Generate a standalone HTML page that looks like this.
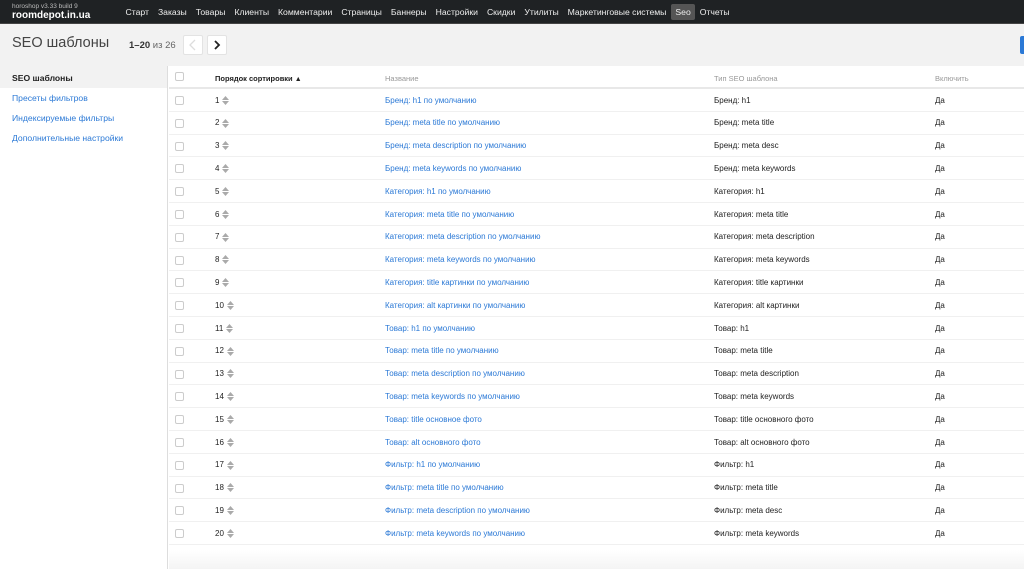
<!DOCTYPE html>
<html><head><meta charset="utf-8"><style>
*{box-sizing:border-box;margin:0;padding:0}
body{width:1024px;height:569px;overflow:hidden;background:#fff;font-family:"Liberation Sans",sans-serif;position:relative}
.nav{position:absolute;left:0;top:0;width:1024px;height:24px;background:#1f2224;border-bottom:1px solid #444}
.ver{position:absolute;left:12px;top:3px;font-size:6.5px;color:#bbb}
.logo{position:absolute;left:12px;top:9.5px;font-size:10px;font-weight:bold;color:#fff}
.menu{position:absolute;left:121px;top:4px;display:flex;font-size:8.65px;color:#eee}
.menu span{padding:3px 4.5px;border-radius:2px}
.menu .act{background:#555}
.head{position:absolute;left:0;top:24px;width:1024px;height:42px;background:#f2f2f2}
.title{position:absolute;left:12px;top:11px;font-size:14.5px;color:#444}
.cnt{position:absolute;left:129px;top:15.5px;font-size:9.5px;color:#333}
.btn{position:absolute;top:11px;width:20px;height:20px;background:#fff;border:1px solid #e3e3e3;border-radius:2px}
.blue{position:absolute;right:0;top:12px;width:4px;height:18px;background:#2b79d6;border-radius:2px 0 0 2px}
.side{position:absolute;left:0;top:66px;width:168px;height:503px;border-right:1px solid #ddd}
.side div{height:20px;padding-left:12px;font-size:8.6px;color:#2b79d6;line-height:20px}
.side .a{background:#f2f2f2;color:#222;font-weight:bold;height:22px;line-height:24px}
.th{position:absolute;left:169px;top:66px;width:855px;height:23px;border-bottom:2px solid #e8e8e8;font-size:7.5px;color:#999}
.row{position:absolute;left:169px;width:855px;height:22.8px;border-bottom:1px solid #f0f0f0;font-size:8px;color:#222}
.cb{position:absolute;left:6px;top:7px;width:9px;height:9px;border:1px solid #ccc;border-radius:2px;background:#fff}
.c{position:absolute;top:6.5px;white-space:nowrap}
.n{left:46px}.nm{left:216px;color:#2b79d6}.t{left:545px}.e{left:766px}
.arr{display:inline-block;vertical-align:middle;margin-left:3px;width:7px;height:9px}
.foot{position:absolute;left:169px;top:550px;width:855px;height:19px;background:linear-gradient(#fff,#f4f4f4)}
</style></head><body>
<div class="nav"><div class="ver">horoshop v3.33 build 9</div><div class="logo">roomdepot.in.ua</div>
<div class="menu"><span>Старт</span><span>Заказы</span><span>Товары</span><span>Клиенты</span><span>Комментарии</span><span>Страницы</span><span>Баннеры</span><span>Настройки</span><span>Скидки</span><span>Утилиты</span><span>Маркетинговые системы</span><span class="act">Seo</span><span>Отчеты</span></div></div>
<div class="head"><div class="title">SEO шаблоны</div><div class="cnt"><b>1–20</b> <span style="color:#666">из 26</span></div>
<div class="btn" style="left:183px"><svg width="18" height="18" viewBox="0 0 18 18"><path d="M11 4l-5 5 5 5" fill="none" stroke="#ddd" stroke-width="1.3"/></svg></div>
<div class="btn" style="left:207px"><svg width="18" height="18" viewBox="0 0 18 18"><path d="M7 5l4 4-4 4" fill="none" stroke="#222" stroke-width="1.8"/></svg></div>
<div class="blue"></div></div>
<div class="side"><div class="a">SEO шаблоны</div><div>Пресеты фильтров</div><div>Индексируемые фильтры</div><div>Дополнительные настройки</div></div>
<div class="th"><div class="cb" style="top:6px"></div><div class="c" style="left:46px;top:8px;color:#222;font-weight:bold">Порядок сортировки <span style="font-size:7px">▲</span></div><div class="c" style="left:216px;top:8px">Название</div><div class="c" style="left:545px;top:8px">Тип SEO шаблона</div><div class="c" style="left:766px;top:8px">Включить</div></div>
<div id="rows"></div>
<div class="foot"></div>
<script>
var d=[["Бренд: h1 по умолчанию","Бренд: h1"],["Бренд: meta title по умолчанию","Бренд: meta title"],["Бренд: meta description по умолчанию","Бренд: meta desc"],["Бренд: meta keywords по умолчанию","Бренд: meta keywords"],["Категория: h1 по умолчанию","Категория: h1"],["Категория: meta title по умолчанию","Категория: meta title"],["Категория: meta description по умолчанию","Категория: meta description"],["Категория: meta keywords по умолчанию","Категория: meta keywords"],["Категория: title картинки по умолчанию","Категория: title картинки"],["Категория: alt картинки по умолчанию","Категория: alt картинки"],["Товар: h1 по умолчанию","Товар: h1"],["Товар: meta title по умолчанию","Товар: meta title"],["Товар: meta description по умолчанию","Товар: meta description"],["Товар: meta keywords по умолчанию","Товар: meta keywords"],["Товар: title основное фото","Товар: title основного фото"],["Товар: alt основного фото","Товар: alt основного фото"],["Фильтр: h1 по умолчанию","Фильтр: h1"],["Фильтр: meta title по умолчанию","Фильтр: meta title"],["Фильтр: meta description по умолчанию","Фильтр: meta desc"],["Фильтр: meta keywords по умолчанию","Фильтр: meta keywords"]];
var h="";d.forEach(function(r,i){h+='<div class="row" style="top:'+(89+i*22.8)+'px"><div class="cb"></div><div class="c n">'+(i+1)+'<svg class="arr" viewBox="0 0 7 9"><path d="M0 4L3.5 0 7 4zM0 5l3.5 4L7 5z" fill="#aaa"/></svg></div><div class="c nm">'+r[0]+'</div><div class="c t">'+r[1]+'</div><div class="c e">Да</div></div>'});
document.getElementById("rows").innerHTML=h;
</script>
</body></html>
